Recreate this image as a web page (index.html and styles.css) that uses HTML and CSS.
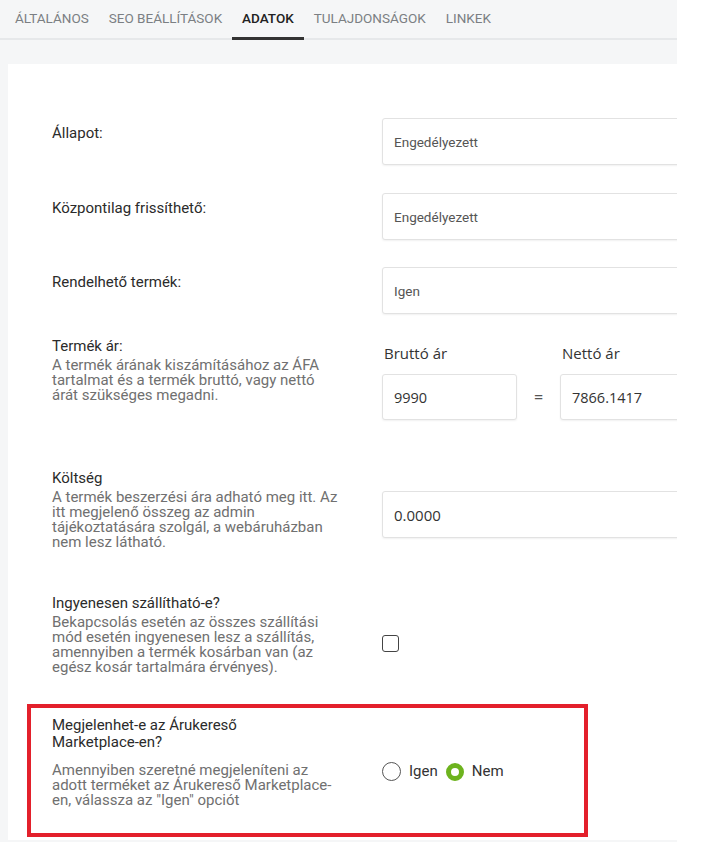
FILE: index.html
```html
<!DOCTYPE html>
<html lang="hu">
<head>
<meta charset="utf-8">
<title>Termék adatok</title>
<link rel="stylesheet" href="styles.css">
</head>
<body>
<div class="frame">
  <nav class="tabs">
    <a class="tab">Általános</a>
    <a class="tab">SEO beállítások</a>
    <a class="tab active">Adatok</a>
    <a class="tab">Tulajdonságok</a>
    <a class="tab">Linkek</a>
  </nav>
  <div class="card">
    <div class="row r-status">
      <div class="label"><div class="title">Állapot:</div></div>
      <div class="field"><div class="select">Engedélyezett</div></div>
    </div>
    <div class="row r-central">
      <div class="label"><div class="title">Központilag frissíthető:</div></div>
      <div class="field"><div class="select">Engedélyezett</div></div>
    </div>
    <div class="row r-order">
      <div class="label"><div class="title">Rendelhető termék:</div></div>
      <div class="field"><div class="select">Igen</div></div>
    </div>
    <div class="row r-price">
      <div class="label">
        <div class="title">Termék ár:</div>
        <div class="desc">A termék árának kiszámításához az ÁFA tartalmat és a termék bruttó, vagy nettó árát szükséges megadni.</div>
      </div>
      <div class="field price">
        <div class="pcol gross">
          <div class="plabel">Bruttó ár</div>
          <div class="input num">9990</div>
        </div>
        <div class="eq">=</div>
        <div class="pcol net">
          <div class="plabel">Nettó ár</div>
          <div class="input num">7866.1417</div>
        </div>
      </div>
    </div>
    <div class="row r-cost">
      <div class="label">
        <div class="title">Költség</div>
        <div class="desc">A termék beszerzési ára adható meg itt. Az itt megjelenő összeg az admin tájékoztatására szolgál, a webáruházban nem lesz látható.</div>
      </div>
      <div class="field cost"><div class="input num">0.0000</div></div>
    </div>
    <div class="row r-free">
      <div class="label">
        <div class="title">Ingyenesen szállítható-e?</div>
        <div class="desc">Bekapcsolás esetén az összes szállítási mód esetén ingyenesen lesz a szállítás, amennyiben a termék kosárban van (az egész kosár tartalmára érvényes).</div>
      </div>
      <div class="field free"><span class="checkbox"></span></div>
    </div>
    <div class="row r-market">
      <div class="label">
        <div class="title">Megjelenhet-e az Árukereső <span class="nowrap">Marketplace-en?</span></div>
        <div class="desc">Amennyiben szeretné megjeleníteni az adott terméket az Árukereső Marketplace-en, válassza az "Igen" opciót</div>
      </div>
      <div class="field market">
        <label class="radio"><span class="dot"></span>Igen</label>
        <label class="radio on"><span class="dot"></span>Nem</label>
      </div>
    </div>
  </div>
</div>
</body>
</html>
```

FILE: styles.css
```css
* { box-sizing: border-box; }
html, body { margin: 0; background: #fff; }
body { font-family: Roboto, "Noto Sans", Arial, sans-serif; color: #333; }

.frame {
  width: 677px;
  height: 842px;
  overflow: hidden;
  background: #f5f6f7;
}

.tabs {
  display: flex;
  height: 40px;
  padding-left: 5px;
  border-bottom: 2px solid #e6e8ea;
}
.tab {
  padding: 10px 10px 0;
  font-size: 13.5px;
  line-height: 17px;
  text-transform: uppercase;
  color: #7b7f83;
  white-space: nowrap;
  border-bottom: 3px solid transparent;
  margin-bottom: -2px;
}
.tab.active {
  color: #222;
  font-weight: 500;
  border-bottom-color: #333;
}

.card {
  margin: 24px 0 0 8px;
  background: #fff;
  height: 776px;
  padding: 54px 0 0 44px;
}

.row {
  display: grid;
  grid-template-columns: 292px 1fr;
  column-gap: 38px;
}
.title { font-size: 15px; line-height: 17px; color: #2b2b2b; }
.nowrap { white-space: nowrap; }
.label { padding-top: 7px; }
.desc { font-size: 15px; line-height: 15px; color: #707070; margin-top: 3px; }

.select, .input {
  height: 47px;
  border: 1px solid #e2e2e2;
  border-radius: 3px;
  box-shadow: 0 1px 2px rgba(0,0,0,0.06);
  display: flex;
  align-items: center;
  padding-left: 11px;
  font-size: 13.5px;
  color: #555;
  background: #fff;
}
.field .select { margin-right: -20px; }

.r-central { margin-top: 28px; }
.r-order { margin-top: 27px; }

.r-price { margin-top: 24px; }
.r-price .label { padding-top: 0; }
.price { display: flex; align-items: flex-end; padding-top: 6px; }
.plabel { font-family: "Open Sans", sans-serif; font-size: 15px; line-height: 18px; color: #333; margin: 0 0 12px 2px; }
.num { font-family: "Open Sans", sans-serif; font-size: 14.5px; color: #333; padding-left: 11px; height: 46px; }
.gross .input { width: 135px; }
.eq { width: 43px; text-align: center; font-family: "Open Sans", sans-serif; font-size: 16px; color: #555; line-height: 46px; height: 46px; }
.net { flex: 1; }
.net .input { margin-right: -20px; }

.r-cost { margin-top: 50px; }
.r-cost .label { padding-top: 0; }
.cost { padding-top: 21px; }
.cost .input { height: 47px; margin-right: -20px; font-size: 15px; }

.r-free { margin-top: 45px; }
.r-free .label { padding-top: 0; }
.free { padding-top: 40px; }
.checkbox {
  display: block;
  width: 17px;
  height: 17px;
  border: 1.5px solid #444;
  border-radius: 3px;
}

.r-market {
  margin: 29px 0 0 -25px;
  width: 561px;
  border: 4px solid #e3202b;
  padding: 9px 0 25px 21px;
}
.r-market .label { padding-top: 0; }
.r-market .desc { margin-top: 12px; }
.market { display: flex; align-items: center; padding-top: 45px; align-self: start; }
.radio { display: flex; align-items: center; font-size: 15px; color: #333; margin-right: 8px; line-height: 19px; }
.dot {
  width: 19px;
  height: 19px;
  border-radius: 50%;
  border: 1.5px solid #555;
  margin-right: 8px;
}
.radio.on .dot {
  width: 18px;
  height: 18px;
  border: 5px solid #6db31e;
}
```
